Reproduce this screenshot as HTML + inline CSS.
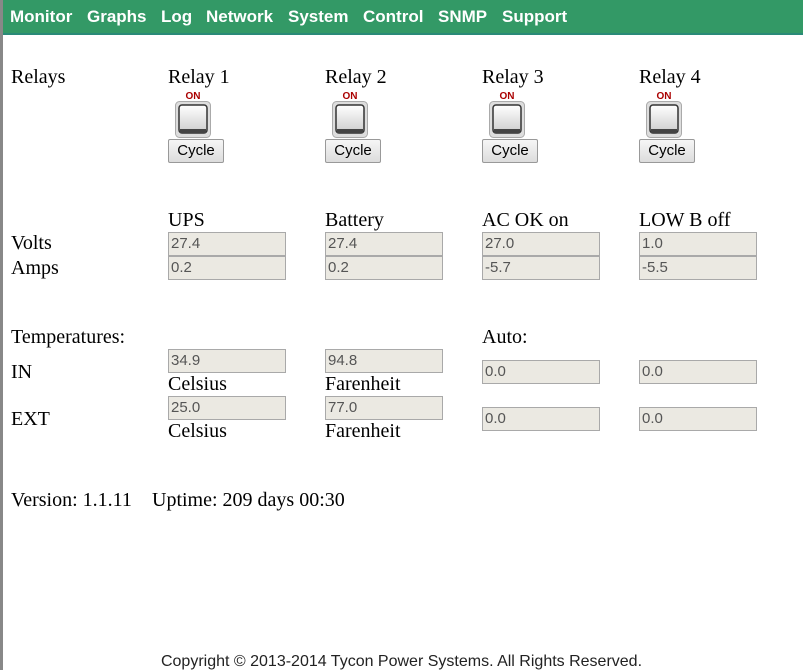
<!DOCTYPE html>
<html><head><style>
body{margin:0;width:803px;height:670px;overflow:hidden;background:#fff;position:relative;font-family:"Liberation Serif",serif;font-size:20px;color:#000}
.lb{position:absolute;left:0;top:0;width:3px;height:670px;background:#888}
.nav{position:absolute;left:3px;top:0;width:800px;height:33px;background:#339966;border-bottom:2px solid #2a8a78}
.nav span{position:absolute;top:7px;color:#fff;font:bold 17px "Liberation Sans",sans-serif}
.t{position:absolute;white-space:nowrap}
.in{position:absolute;width:114px;height:22px;border:1px solid #a9a9a9;background:#ebe9e2;font:15px "Liberation Sans",sans-serif;color:#555;line-height:22px;padding-left:2px;box-sizing:content-box}
.sw{position:absolute;width:36px;height:48px}
.btn{position:absolute;width:54px;height:22px;border:1px solid #999;border-radius:2px;background:linear-gradient(#f6f6f6,#dcdcdc);font:15px "Liberation Sans",sans-serif;text-align:center;line-height:22px}
.foot{position:absolute;left:0;width:803px;top:653px;text-align:center;font:16px "Liberation Sans",sans-serif;color:#222}
</style></head><body>
<div class="lb"></div>
<div class="nav">
<span style="left:7px">Monitor</span><span style="left:84px">Graphs</span><span style="left:158px">Log</span><span style="left:203px">Network</span><span style="left:285px">System</span><span style="left:360px">Control</span><span style="left:435px">SNMP</span><span style="left:499px">Support</span>
</div>
<div class="t" style="left:11px;top:66px">Relays</div>

<div class="t" style="left:168px;top:66px">Relay 1</div>
<div class="t" style="left:325px;top:66px">Relay 2</div>
<div class="t" style="left:482px;top:66px">Relay 3</div>
<div class="t" style="left:639px;top:66px">Relay 4</div>

<svg class="sw" style="left:175px;top:90px" viewBox="0 0 36 48"><defs><linearGradient id="g" x1="0" y1="0" x2="0" y2="1"><stop offset="0" stop-color="#fff"/><stop offset="1" stop-color="#ccc"/></linearGradient></defs><text x="18" y="9" text-anchor="middle" font-family="Liberation Sans" font-weight="bold" font-size="10" fill="#a00">ON</text><rect x="0.5" y="11.5" width="35" height="36" rx="4" fill="#ddd" stroke="#aaa"/><rect x="4" y="15" width="28" height="28" rx="3" fill="url(#g)" stroke="#333" stroke-width="1.5"/><rect x="5" y="39" width="26" height="4" fill="#444"/></svg>
<svg class="sw" style="left:332px;top:90px" viewBox="0 0 36 48"><text x="18" y="9" text-anchor="middle" font-family="Liberation Sans" font-weight="bold" font-size="10" fill="#a00">ON</text><rect x="0.5" y="11.5" width="35" height="36" rx="4" fill="#ddd" stroke="#aaa"/><rect x="4" y="15" width="28" height="28" rx="3" fill="url(#g)" stroke="#333" stroke-width="1.5"/><rect x="5" y="39" width="26" height="4" fill="#444"/></svg>
<svg class="sw" style="left:489px;top:90px" viewBox="0 0 36 48"><text x="18" y="9" text-anchor="middle" font-family="Liberation Sans" font-weight="bold" font-size="10" fill="#a00">ON</text><rect x="0.5" y="11.5" width="35" height="36" rx="4" fill="#ddd" stroke="#aaa"/><rect x="4" y="15" width="28" height="28" rx="3" fill="url(#g)" stroke="#333" stroke-width="1.5"/><rect x="5" y="39" width="26" height="4" fill="#444"/></svg>
<svg class="sw" style="left:646px;top:90px" viewBox="0 0 36 48"><text x="18" y="9" text-anchor="middle" font-family="Liberation Sans" font-weight="bold" font-size="10" fill="#a00">ON</text><rect x="0.5" y="11.5" width="35" height="36" rx="4" fill="#ddd" stroke="#aaa"/><rect x="4" y="15" width="28" height="28" rx="3" fill="url(#g)" stroke="#333" stroke-width="1.5"/><rect x="5" y="39" width="26" height="4" fill="#444"/></svg>

<div class="btn" style="left:168px;top:139px">Cycle</div>
<div class="btn" style="left:325px;top:139px">Cycle</div>
<div class="btn" style="left:482px;top:139px">Cycle</div>
<div class="btn" style="left:639px;top:139px">Cycle</div>

<div class="t" style="left:168px;top:209px">UPS</div>
<div class="t" style="left:325px;top:209px">Battery</div>
<div class="t" style="left:482px;top:209px">AC OK on</div>
<div class="t" style="left:639px;top:209px">LOW B off</div>
<div class="t" style="left:11px;top:232px">Volts</div>
<div class="t" style="left:11px;top:257px">Amps</div>
<div class="in" style="left:168px;top:232px">27.4</div>
<div class="in" style="left:325px;top:232px">27.4</div>
<div class="in" style="left:482px;top:232px">27.0</div>
<div class="in" style="left:639px;top:232px">1.0</div>
<div class="in" style="left:168px;top:256px">0.2</div>
<div class="in" style="left:325px;top:256px">0.2</div>
<div class="in" style="left:482px;top:256px">-5.7</div>
<div class="in" style="left:639px;top:256px">-5.5</div>

<div class="t" style="left:11px;top:326px">Temperatures:</div>
<div class="t" style="left:482px;top:326px">Auto:</div>
<div class="t" style="left:11px;top:361px">IN</div>
<div class="t" style="left:11px;top:408px">EXT</div>
<div class="in" style="left:168px;top:349px">34.9</div>
<div class="in" style="left:325px;top:349px">94.8</div>
<div class="t" style="left:168px;top:373px">Celsius</div>
<div class="t" style="left:325px;top:373px">Farenheit</div>
<div class="in" style="left:168px;top:396px">25.0</div>
<div class="in" style="left:325px;top:396px">77.0</div>
<div class="t" style="left:168px;top:420px">Celsius</div>
<div class="t" style="left:325px;top:420px">Farenheit</div>
<div class="in" style="left:482px;top:360px">0.0</div>
<div class="in" style="left:639px;top:360px">0.0</div>
<div class="in" style="left:482px;top:407px">0.0</div>
<div class="in" style="left:639px;top:407px">0.0</div>

<div class="t" style="left:11px;top:489px">Version: 1.1.11</div>
<div class="t" style="left:152px;top:489px">Uptime: 209 days 00:30</div>
<div class="foot">Copyright © 2013-2014 Tycon Power Systems. All Rights Reserved.</div>
</body></html>
